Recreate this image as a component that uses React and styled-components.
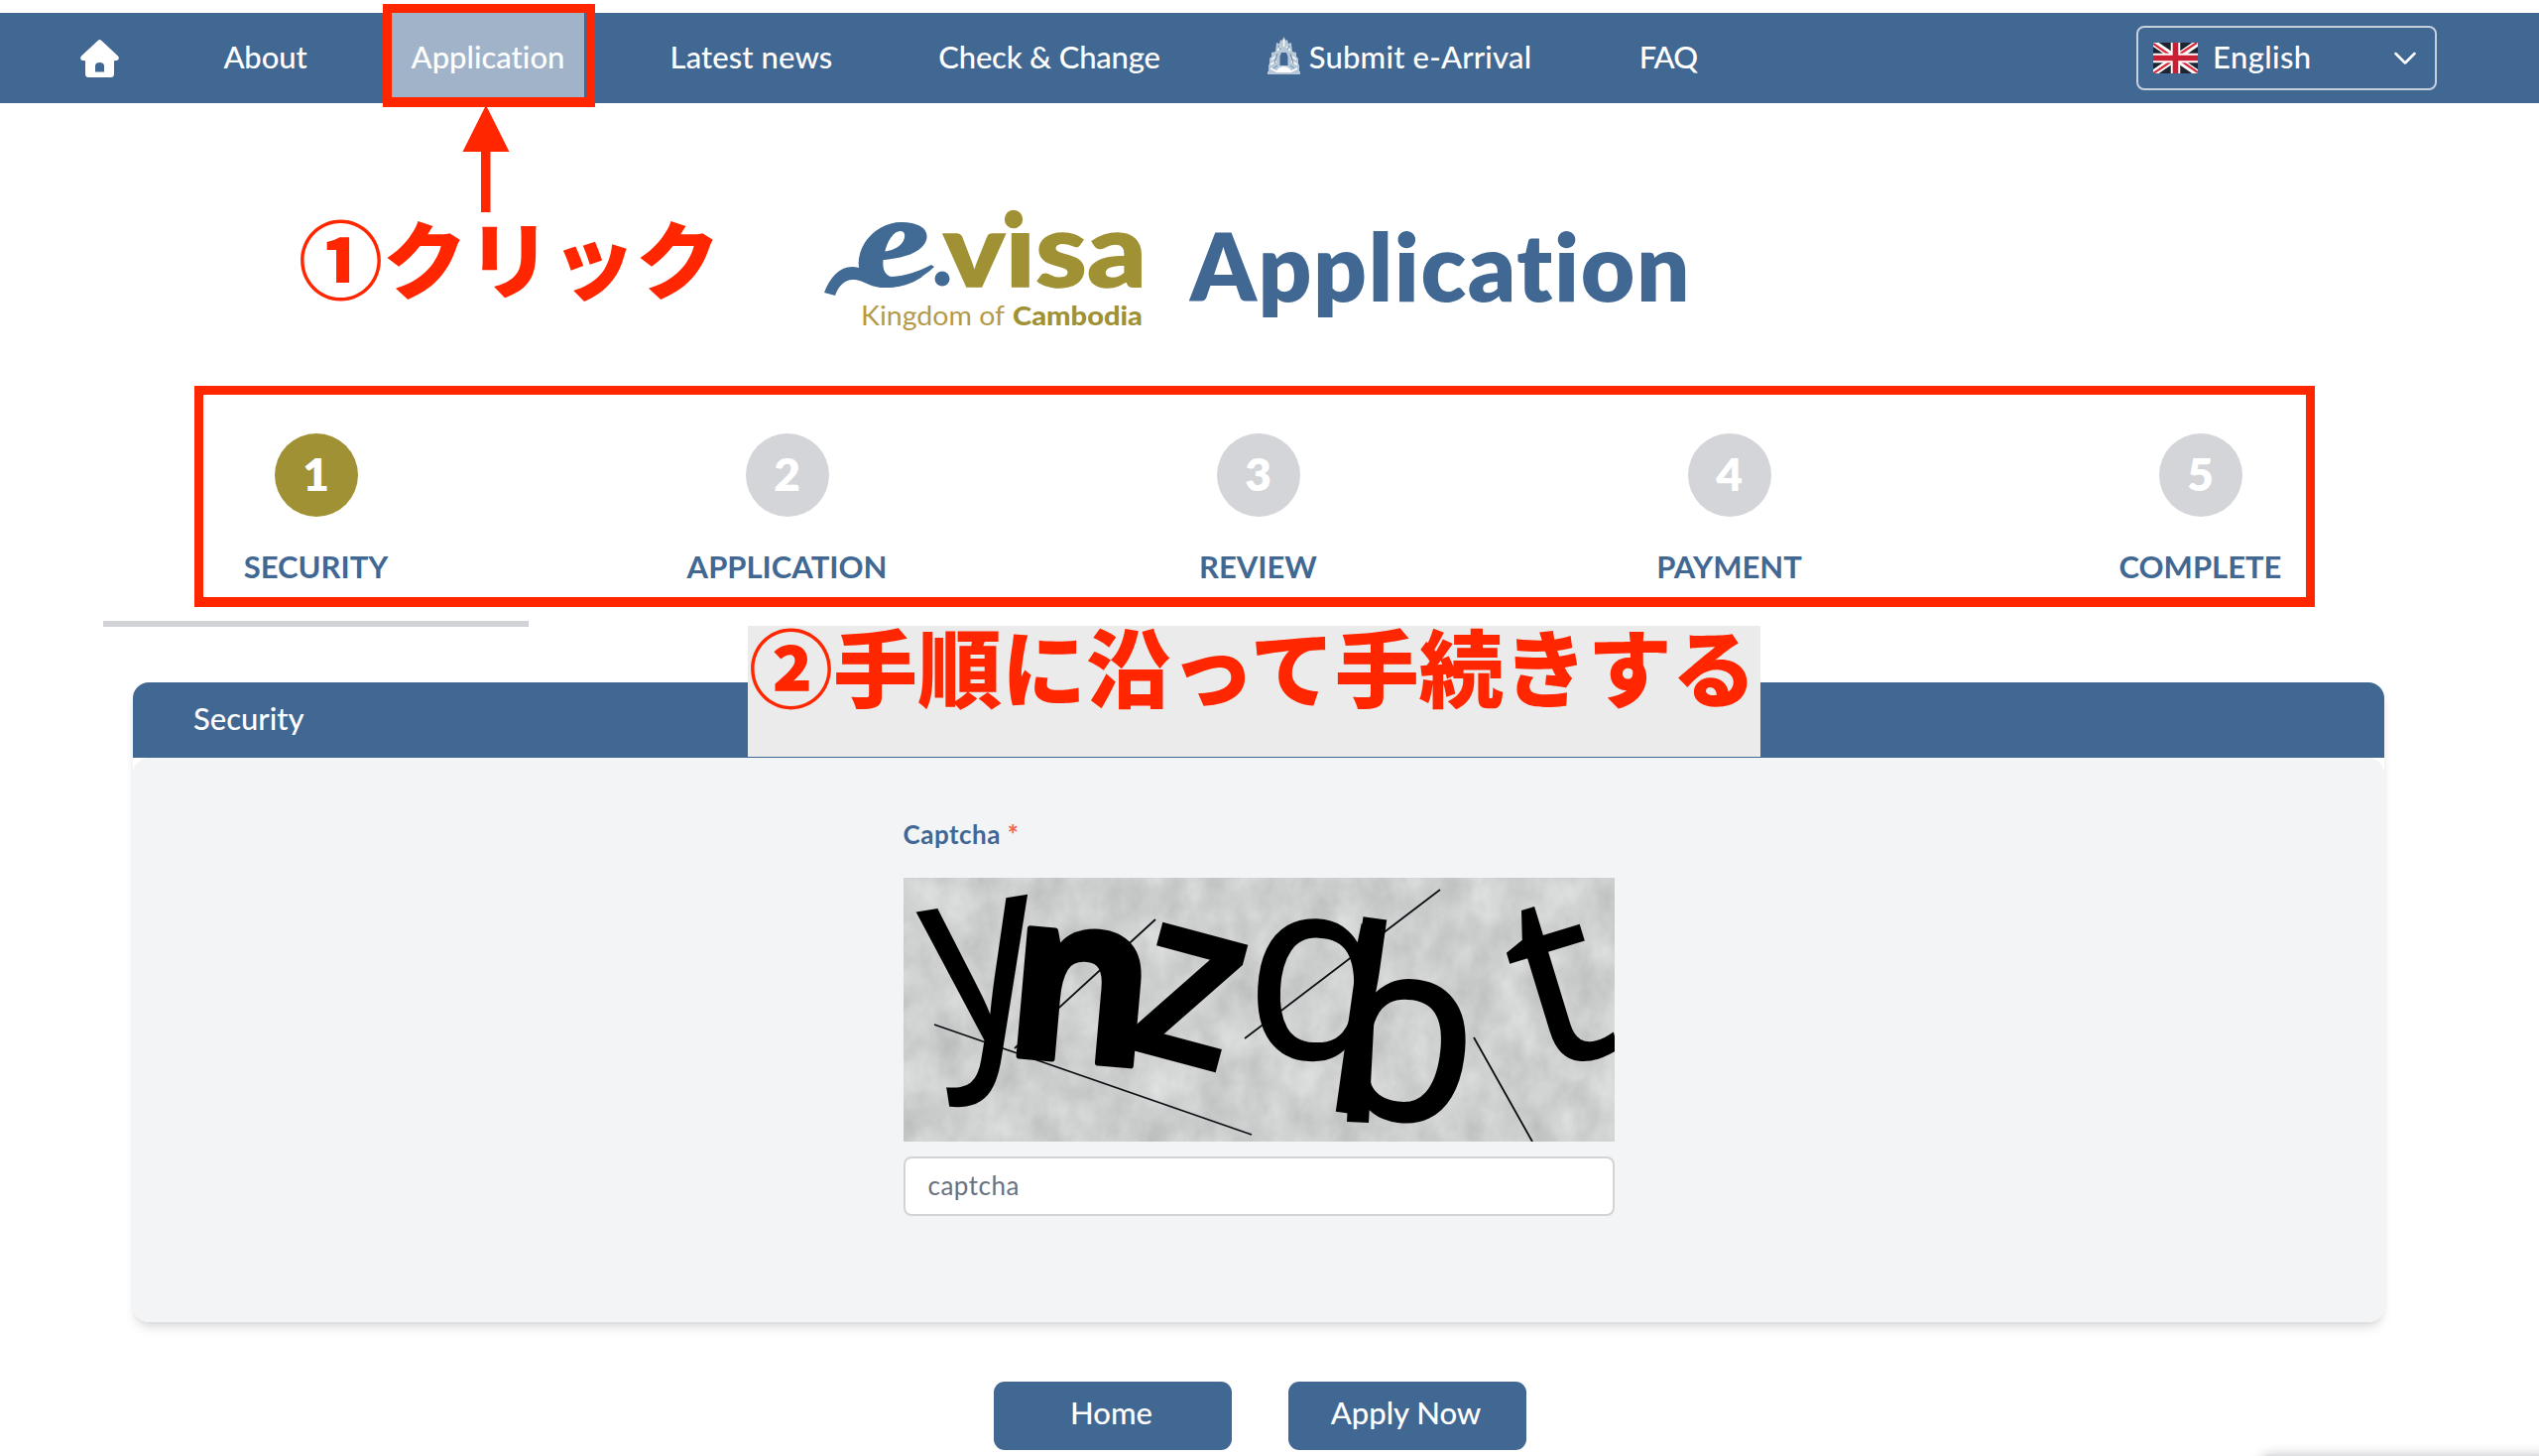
import React, { useState } from "react";
import styled, { createGlobalStyle } from "styled-components";

const navItems = [
  { label: "About", width: 83, spacing: -0.1 },
  { label: "Application", width: 154, spacing: 0, active: true },
  { label: "Latest news", width: 165, spacing: 0.1 },
  { label: "Check & Change", width: 224, spacing: -0.2 },
  { label: "Submit e-Arrival", width: 270, spacing: 0.2, emblem: true },
  { label: "FAQ", width: 60, spacing: -0.8 },
];

const steps = ["Security", "Application", "Review", "Payment", "Complete"];

const HomeIcon = () => (
  <svg width="39" height="38" viewBox="0 0 39 38" fill="#fff">
    <path
      fillRule="evenodd"
      d="M17.600 .9Q19.500 -.8 21.400 .9L38 16.600Q39.600 18.600 38.200 20.200Q37.600 21.300 34 21.300V34.500Q34 38 30.500 38H8.500Q5 38 5 34.500V21.300Q1.400 21.300 .8 20.200Q-.6 18.600 1 16.600ZM15 32.600H24V26.500Q24 23 19.500 23Q15 23 15 26.500Z"
    />
  </svg>
);

const EmblemIcon = () => (
  <svg width="33" height="38" viewBox="0 0 33 38">
    <path
      fillRule="evenodd"
      fill="#b7c8d8"
      d="M16.500 0L18.500 4L20 3L21 7L24 6L24.500 11L25 15L29 16L29 20L31 22L31 27L32 29V35H33V38H0V35H1V29L2 27V22L4 20V16L8 15L8.500 11L9 6L12 7L13 3L14.500 4ZM12.500 29H20.500V20L19 16H14L12.500 20Z"
    />
    <path
      stroke="#fff"
      strokeWidth="1.500"
      fill="none"
      d="M4 23L8 20M3 28L9 25M10 14L13 10M23 14L19 10M29 23L25 20M30 28L24 25M3 32L9 35M30 32L24 35M16.500 3V10"
    />
    <path stroke="#6d8bab" strokeWidth="1" fill="none" d="M10 17L7 27M23 17L26 27M11 9L13 13M22 9L20 13M6 32L10 29M27 32L23 29" />
    <path fill="#fff" d="M8 36Q11 30 16.500 30Q22 30 25 36Z" />
  </svg>
);

const FlagIcon = () => (
  <svg width="45" height="31" viewBox="0 0 45 31">
    <rect width="45" height="31" fill="#1e2430" />
    <path d="M0 0L45 31M45 0L0 31" stroke="#fff" strokeWidth="6.500" />
    <path d="M0 1L19 14M26 17L45 30M44 0L26 12M18 19L0 31" stroke="#d8283a" strokeWidth="2.200" />
    <path d="M22.500 0V31M0 15.500H45" stroke="#fff" strokeWidth="9.500" />
    <path d="M22.500 0V31M0 15.500H45" stroke="#cb1f33" strokeWidth="5.600" />
  </svg>
);

const ChevronIcon = () => (
  <svg width="22" height="14" viewBox="0 0 22 14" fill="none">
    <path d="M1.500 2L11 11.500L20.500 2" stroke="#fff" strokeWidth="2.500" strokeLinecap="round" strokeLinejoin="round" />
  </svg>
);

const EvisaLogo = () => (
  <svg width="350" height="140" viewBox="0 0 350 140">
    {/* swash that runs through the foot of the e */}
    <path
      fill="#416a94"
      d="M11 95C17 79 27 69 39 69C44 69 47 70 49 71C54 78 62 80 76 79C93 79 107 73 119 67L122 69C108 82 92 90 72 90C56 90 51 82 40 82C31 82 25 89 22 98Z"
    />
    <text x="43" y="88" fontFamily="Liberation Serif, serif" fontSize="133" fontWeight="700" fontStyle="italic" fill="#416a94" stroke="#416a94" strokeWidth="2" textLength="74" lengthAdjust="spacingAndGlyphs">
      e
    </text>
    <circle cx="130" cy="81" r="7.500" fill="#416a94" />
    <text x="131" y="89" fontFamily="Lato, sans-serif" fontSize="102" fontWeight="900" fill="#a09234" stroke="#a09234" strokeWidth="1.500" textLength="205" lengthAdjust="spacingAndGlyphs">
      vısa
    </text>
    <circle cx="202" cy="21" r="9.200" fill="#a09234" />
    <text x="48" y="128" fontFamily="Lato, sans-serif" fontSize="26" fill="#b59a4a" textLength="145" lengthAdjust="spacingAndGlyphs">
      Kingdom of
    </text>
    <text x="201" y="128" fontFamily="Lato, sans-serif" fontSize="26" fontWeight="900" fill="#a09234" textLength="131" lengthAdjust="spacingAndGlyphs">
      Cambodia
    </text>
  </svg>
);

const CaptchaImage = () => (
  <svg width="717" height="266" viewBox="0 0 717 266">
    <defs>
      <filter id="paper" x="0" y="0" width="100%" height="100%" colorInterpolationFilters="sRGB">
        <feTurbulence type="fractalNoise" baseFrequency="0.030 0.022" numOctaves="5" seed="8" />
        <feColorMatrix values="0.180 0 0 0 0.718  0.180 0 0 0 0.722  0.180 0 0 0 0.722  0 0 0 0 1" />
      </filter>
    </defs>
    <rect width="717" height="266" fill="#cdcecf" filter="url(#paper)" />
    <g stroke="#0c1014" strokeWidth="1.800">
      <path d="M31 148L351 259M112 172L254 42M344 162L541 12M575 161L634 266" />
    </g>
    <g fill="#000" stroke="#000" strokeWidth="2" fontFamily="Open Sans, sans-serif" fontSize="262">
      <text transform="translate(36 171) rotate(-9) scale(0.86 1)" fontSize="256" strokeWidth="3">y</text>
      <text transform="translate(99 178) rotate(5) scale(0.95 1)" fontWeight="700" fontSize="236" strokeWidth="6" strokeLinejoin="round">n</text>
      <text transform="translate(218 169) rotate(15) scale(0.93 1)" fontWeight="600" fontSize="240" strokeWidth="3">z</text>
      <text transform="translate(341 178) rotate(3) scale(0.97 1)" fontSize="256">q</text>
      <text transform="translate(417 231) rotate(8) scale(0.97 1)" fontSize="256" strokeWidth="4">b</text>
      <text transform="translate(642 197) rotate(-17)" fontSize="245">t</text>
    </g>
  </svg>
);

const App = () => {
  const [captcha, setCaptcha] = useState("");

  return (
    <Page>
      <GlobalStyle />
      <NavBar>
        <HomeIcon />
        <NavList>
          {navItems.map((item) => (
            <NavItem key={item.label} $width={item.width} $spacing={item.spacing} $active={item.active}>
              {item.emblem && <EmblemIcon />}
              <NavText>{item.label}</NavText>
            </NavItem>
          ))}
        </NavList>
        <LanguageSelect>
          <FlagIcon />
          <Language>English</Language>
          <ChevronIcon />
        </LanguageSelect>
      </NavBar>

      <TitleRow>
        <EvisaLogo />
        <Title>Application</Title>
      </TitleRow>

      <StepList>
        {steps.map((step, i) => (
          <Step key={step}>
            <StepNumber $active={i === 0}>{i + 1}</StepNumber>
            <StepLabel>{step}</StepLabel>
          </Step>
        ))}
      </StepList>
      <Progress />

      <Card>
        <CardHeader>Security</CardHeader>
        <CardBody>
          <Field>
            <Label htmlFor="captcha">
              Captcha <Required>*</Required>
            </Label>
            <CaptchaImage />
            <Input
              type="text"
              id="captcha"
              value={captcha}
              onChange={(e) => setCaptcha(e.target.value)}
              placeholder="captcha"
            />
          </Field>
        </CardBody>
      </Card>

      <Actions>
        <Button type="button">Home</Button>
        <Button type="button">Apply Now</Button>
      </Actions>

      <NavFrame />
      <Arrow width="48" height="108" viewBox="0 0 48 108">
        <path d="M24 0L47.500 47H28.500V108H19V47H.5Z" fill="#ff2600" />
      </Arrow>
      <ClickNote>①クリック</ClickNote>
      <StepsFrame />
      <StepsNote>②手順に沿って手続きする</StepsNote>
      <ChatPanel />
    </Page>
  );
};

export default App;

// Styled Components
const GlobalStyle = createGlobalStyle`
  * {
    box-sizing: border-box;
  }

  body {
    margin: 0;
    background: #fff;
    font-family: Lato, sans-serif;
    font-variant-ligatures: none;
  }

  svg {
    display: block;
    flex-shrink: 0;
  }
`;

const Page = styled.div`
  position: relative;
  width: 2560px;
  height: 1468px;
  padding-top: 13px;
  overflow: hidden;
  color: #416793;
`;

const NavBar = styled.nav`
  display: flex;
  align-items: center;
  height: 91px;
  padding: 0 103px 0 81px;
  background: #416793;
  color: white;
`;

const NavList = styled.div`
  display: flex;
  gap: 66px;
  height: 100%;
  margin-left: 86px;
`;

const NavItem = styled.div`
  display: flex;
  align-items: center;
  justify-content: center;
  gap: 9px;
  box-sizing: content-box;
  width: ${(props) => props.$width}px;
  padding: 0 20px;
  font-size: 31px;
  font-weight: 500;
  letter-spacing: ${(props) => props.$spacing}px;
  white-space: nowrap;
  background: ${(props) => (props.$active ? "#a1b3c8" : "transparent")};

  svg {
    margin-bottom: 6px;
  }
`;

const NavText = styled.span`
  padding-bottom: 4px;
`;

const LanguageSelect = styled.div`
  display: flex;
  align-items: center;
  width: 303px;
  height: 65px;
  margin-left: auto;
  padding: 0 19px 0 15px;
  border: 2px solid #c6d1dd;
  border-radius: 8px;
`;

const Language = styled.span`
  flex: 1;
  margin-left: 15px;
  padding-bottom: 4px;
  font-size: 31px;
  font-weight: 500;
  letter-spacing: 0.4px;
`;

const TitleRow = styled.div`
  display: flex;
  gap: 30px;
  margin-top: 96px;
  padding-left: 820px;
`;

const Title = styled.h1`
  margin: 21px 0 0;
  font-size: 94px;
  font-weight: 800;
  line-height: 1;
  letter-spacing: 1.6px;
`;

const StepList = styled.div`
  display: grid;
  grid-template-columns: repeat(5, 475px);
  margin: 97px 0 0 81px;
`;

const Step = styled.div`
  display: flex;
  flex-direction: column;
  align-items: center;
`;

const StepNumber = styled.div`
  display: flex;
  align-items: center;
  justify-content: center;
  width: 84px;
  height: 84px;
  padding-bottom: 3px;
  border-radius: 50%;
  background: ${(props) => (props.$active ? "#a09234" : "#d4d5d9")};
  color: white;
  font-size: 46px;
  font-weight: 800;
`;

const StepLabel = styled.div`
  margin-top: 31px;
  font-size: 31px;
  font-weight: 700;
  line-height: 38px;
  text-transform: uppercase;
`;

const Progress = styled.div`
  width: 429px;
  height: 6px;
  margin: 36px 0 0 104px;
  background: #d1d3d6;
`;

const Card = styled.section`
  width: 2270px;
  margin: 56px 0 0 134px;
  border-radius: 16px;
  box-shadow: 0 8px 12px -2px rgba(0, 0, 0, 0.1), 0 4px 8px -4px rgba(0, 0, 0, 0.12);
`;

const CardHeader = styled.div`
  height: 76px;
  padding-left: 61px;
  border-radius: 16px 16px 0 0;
  background: #416793;
  color: white;
  font-size: 31px;
  font-weight: 500;
  line-height: 73px;
`;

const CardBody = styled.div`
  display: flex;
  justify-content: center;
  height: 569px;
  padding-top: 57px;
  border-radius: 16px;
  background: #f3f4f6;
`;

const Field = styled.div`
  display: flex;
  flex-direction: column;
  width: 717px;
`;

const Label = styled.label`
  height: 64px;
  font-size: 26px;
  font-weight: 700;
  line-height: 40px;
  letter-spacing: 0.5px;
`;

const Required = styled.span`
  color: #f4614d;
`;

const Input = styled.input`
  height: 60px;
  margin-top: 15px;
  padding: 0 23px 3px;
  border: 2px solid #d1d3d6;
  border-radius: 8px;
  background: white;
  color: #374151;
  font-family: inherit;
  font-size: 26px;
  letter-spacing: 0.5px;

  &::placeholder {
    color: #6b7280;
    opacity: 1;
  }
`;

const Actions = styled.div`
  display: flex;
  gap: 57px;
  margin: 60px 0 0 1002px;
`;

const Button = styled.button`
  width: 240px;
  height: 69px;
  padding: 0 3px 7px 0;
  border: none;
  border-radius: 11px;
  background: #416793;
  color: white;
  font-family: inherit;
  font-size: 31px;
  font-weight: 500;
  letter-spacing: 0;
  cursor: pointer;
`;

// Red notes laid over the page
const Frame = styled.div`
  position: absolute;
  border: 9px solid #ff2600;
`;

const NavFrame = styled(Frame)`
  top: 4px;
  left: 386px;
  width: 214px;
  height: 104px;
  border-bottom-width: 10px;
`;

const StepsFrame = styled(Frame)`
  top: 389px;
  left: 196px;
  width: 2138px;
  height: 223px;
  border-bottom-width: 10px;
`;

const Arrow = styled.svg`
  position: absolute;
  top: 106px;
  left: 466px;
`;

const Note = styled.div`
  position: absolute;
  color: #ff2600;
  font-family: "Noto Sans CJK JP", sans-serif;
  font-size: 85px;
  font-weight: 900;
  line-height: 85px;
  white-space: nowrap;
`;

const ClickNote = styled(Note)`
  top: 215px;
  left: 301px;
`;

const StepsNote = styled(Note)`
  top: 631px;
  left: 754px;
  width: 1021px;
  height: 132px;
  padding-left: 1px;
  background: #ebebeb;
  line-height: 78px;
`;

const ChatPanel = styled.div`
  position: absolute;
  top: 1466px;
  left: 2276px;
  width: 300px;
  height: 60px;
  border-radius: 16px;
  background: #dfe2e2;
  box-shadow: 0 0 12px rgba(0, 0, 0, 0.2);
`;
